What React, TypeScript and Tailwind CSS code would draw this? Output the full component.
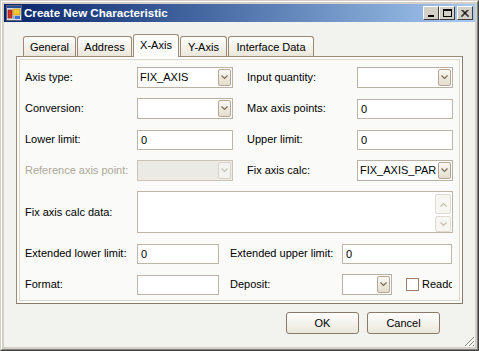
import React from 'react';

const Chevron = ({ up = false, color = '#7a6a58' }: { up?: boolean; color?: string }) => (
  <svg width="7" height="5" viewBox="0 0 7 5">
    <polyline
      points={up ? '0.5,4.5 3.5,1.5 6.5,4.5' : '0.5,0.5 3.5,3.5 6.5,0.5'}
      fill="none"
      stroke={color}
      strokeWidth="1.2"
    />
  </svg>
);

function ComboBox({ width, value = '', disabled = false }: { width: string; value?: string; disabled?: boolean }) {
  return (
    <div
      className={`${width} h-[21px] flex border p-px ${
        disabled ? 'bg-[#ebeae4] border-[#c9c3b8]' : 'bg-white border-[#b9b1a3]'
      }`}
    >
      <div className="flex-1 pl-[1px] leading-[17px] overflow-hidden whitespace-nowrap">{value}</div>
      <div
        className={`w-[13px] h-full flex items-center justify-center rounded-[2px] border ${
          disabled
            ? 'border-[#d8d3ca] bg-[#f3f2ee]'
            : 'border-[#b4a594] bg-gradient-to-b from-[#faf8f2] to-[#e4ddcd]'
        }`}
      >
        <Chevron color={disabled ? '#c6c0b6' : '#7a6a58'} />
      </div>
    </div>
  );
}

function TextBox({ width, value = '' }: { width: string; value?: string }) {
  return (
    <div className={`${width} h-[20px] border border-[#bdb5a7] bg-white pl-[3px] leading-[18px]`}>{value}</div>
  );
}

function Label({ width, children, disabled = false }: { width: string; children: React.ReactNode; disabled?: boolean }) {
  return (
    <div className={`${width} shrink-0 whitespace-nowrap ${disabled ? 'text-[#aca899]' : 'text-black'}`}>{children}</div>
  );
}

function Tab({ label, width, selected = false }: { label: string; width: string; selected?: boolean }) {
  if (selected) {
    return (
      <div
        className={`${width} h-[23px] -mb-px z-10 relative border border-b-0 border-[#9c8a76] rounded-t-[3px] bg-[#fbfbf9] flex items-center justify-center pb-[2px]`}
      >
        {label}
      </div>
    );
  }
  return (
    <div
      className={`${width} h-[20px] border border-b-0 border-[#9c8a76] rounded-t-[3px] bg-gradient-to-b from-[#fefefd] to-[#ebe7dc] flex items-center justify-center pt-[1px]`}
    >
      {label}
    </div>
  );
}

function TitleButton({ children }: { children: React.ReactNode }) {
  return (
    <div className="w-[16px] h-[14px] bg-[#d4d0c8] border-t border-l border-t-white border-l-white border-r border-b border-r-[#404040] border-b-[#404040] flex items-center justify-center">
      {children}
    </div>
  );
}

export default function App() {
  return (
    <div className="w-[479px] h-[351px] font-['Liberation_Sans',Arial,sans-serif] text-[11px] text-black bg-[#d4d0c8] border border-t-[#d4d0c8] border-l-[#d4d0c8] border-r-[#404040] border-b-[#404040]">
      <div className="w-full h-full border border-t-white border-l-white border-r-[#808080] border-b-[#808080] p-[2px] flex flex-col">
        {/* Title bar */}
        <div className="h-[18px] shrink-0 flex items-center bg-gradient-to-r from-[#0a246a] to-[#a6caf0] pl-[2px] pr-[2px]">
          <svg width="16" height="16" viewBox="0 0 16 16" className="shrink-0">
            <rect x="0.5" y="0.5" width="15" height="15" fill="#d8dce8" stroke="#5a6478" />
            <rect x="1" y="1" width="14" height="2" fill="#2a4a9a" />
            <rect x="2" y="5" width="4" height="8" fill="#d43020" stroke="#801810" strokeWidth="0.6" />
            <rect x="7" y="4" width="7" height="6" fill="#f8c830" stroke="#b08010" strokeWidth="0.6" />
            <rect x="9" y="11" width="5" height="3" fill="#4070d0" />
            <rect x="7" y="11" width="1.5" height="3" fill="#90a0b8" />
          </svg>
          <div className="ml-[2px] text-white font-bold text-[11.6px] whitespace-nowrap">Create New Characteristic</div>
          <div className="ml-auto flex items-center">
            <TitleButton>
              <div className="w-[6px] h-[2px] bg-black mt-[6px] mr-[1px]" />
            </TitleButton>
            <TitleButton>
              <div className="w-[9px] h-[8px] border border-black border-t-2" />
            </TitleButton>
            <div className="ml-[2px]">
              <TitleButton>
                <svg width="8" height="7" viewBox="0 0 8 7">
                  <path d="M0.5 0 L7.5 7 M7.5 0 L0.5 7 M1.5 0 L8 6.5 M6.5 0 L0 6.5" stroke="black" strokeWidth="1" />
                </svg>
              </TitleButton>
            </div>
          </div>
        </div>

        {/* Client area */}
        <div className="flex-1 bg-[#f2f2ee] relative flex flex-col pl-[12px] pt-[12px]">
          {/* Tabs */}
          <div className="flex items-end h-[22px] pl-[7px] gap-[1px]">
            <Tab label="General" width="w-[53px]" />
            <Tab label="Address" width="w-[55px]" />
            <Tab label="X-Axis" width="w-[46px]" selected />
            <Tab label="Y-Axis" width="w-[47px]" />
            <Tab label="Interface Data" width="w-[86px]" />
          </div>

          {/* Tab panel */}
          <div className="w-[447px] h-[248px] border border-[#9c8a76] border-r-[#8a7a68] border-b-[#8a7a68] bg-[#fdfdfc] p-[2px]">
            <div className="w-full h-full border border-[#dcd7ce] bg-[#fafaf8] pl-[5px] pt-[7px] flex flex-col gap-[10px]">
              <div className="h-[21px] flex items-center">
                <Label width="w-[112px]">Axis type:</Label>
                <ComboBox width="w-[96px]" value="FIX_AXIS" />
                <div className="w-[14px]" />
                <Label width="w-[110px]">Input quantity:</Label>
                <ComboBox width="w-[96px]" />
              </div>
              <div className="h-[21px] flex items-center">
                <Label width="w-[112px]">Conversion:</Label>
                <ComboBox width="w-[96px]" />
                <div className="w-[14px]" />
                <Label width="w-[110px]">Max axis points:</Label>
                <TextBox width="w-[96px]" value="0" />
              </div>
              <div className="h-[21px] flex items-center">
                <Label width="w-[112px]">Lower limit:</Label>
                <TextBox width="w-[96px]" value="0" />
                <div className="w-[14px]" />
                <Label width="w-[110px]">Upper limit:</Label>
                <TextBox width="w-[96px]" value="0" />
              </div>
              <div className="h-[21px] flex items-center">
                <Label width="w-[112px]" disabled>
                  Reference axis point:
                </Label>
                <ComboBox width="w-[96px]" disabled />
                <div className="w-[14px]" />
                <Label width="w-[110px]">Fix axis calc:</Label>
                <ComboBox width="w-[96px]" value="FIX_AXIS_PAR" />
              </div>
              <div className="h-[42px] flex items-center">
                <Label width="w-[112px]">Fix axis calc data:</Label>
                <div className="w-[316px] h-[42px] border border-[#bdb5a7] bg-white flex justify-end pr-px pt-px">
                  <div className="flex flex-col gap-[2px] pt-px">
                    <div className="w-[16px] h-[20px] border border-[#e0dcd4] bg-[#f7f6f2] rounded-[2px] flex items-center justify-center">
                      <Chevron up color="#c3bcb0" />
                    </div>
                    <div className="w-[16px] h-[16px] border border-[#e0dcd4] bg-[#f7f6f2] rounded-[2px] flex items-center justify-center">
                      <Chevron color="#c3bcb0" />
                    </div>
                  </div>
                </div>
              </div>
              <div className="h-[21px] flex items-center">
                <Label width="w-[112px]">Extended lower limit:</Label>
                <TextBox width="w-[82px]" value="0" />
                <div className="w-[11px]" />
                <Label width="w-[112px]">Extended upper limit:</Label>
                <TextBox width="w-[110px]" value="0" />
              </div>
              <div className="h-[21px] flex items-center">
                <Label width="w-[112px]">Format:</Label>
                <TextBox width="w-[82px]" />
                <div className="w-[11px]" />
                <Label width="w-[112px]">Deposit:</Label>
                <ComboBox width="w-[50px]" />
                <div className="w-[14px]" />
                <div className="w-[46px] flex items-center overflow-hidden whitespace-nowrap">
                  <div className="w-[13px] h-[13px] shrink-0 border border-[#9c7f6c] bg-white" />
                  <span className="ml-[3px]">Readonly</span>
                </div>
              </div>
            </div>
          </div>

          {/* Buttons */}
          <div className="flex mt-[8px] pl-[270px] gap-[8px]">
            <div className="w-[73px] h-[22px] rounded-[3px] border border-[#8a7a68] bg-gradient-to-b from-[#fefefd] to-[#ebe7dc] flex items-center justify-center">
              OK
            </div>
            <div className="w-[73px] h-[22px] rounded-[3px] border border-[#8a7a68] bg-gradient-to-b from-[#fefefd] to-[#ebe7dc] flex items-center justify-center">
              Cancel
            </div>
          </div>

          {/* Size grip */}
          <svg width="12" height="12" viewBox="0 0 12 12" className="absolute right-0 bottom-0">
            <path d="M11 2 L2 11 M11 6 L6 11 M11 10 L10 11" stroke="#8c8a80" strokeWidth="1" />
            <path d="M12 3 L3 12 M12 7 L7 12" stroke="#ffffff" strokeWidth="1" />
          </svg>
        </div>
      </div>
    </div>
  );
}
